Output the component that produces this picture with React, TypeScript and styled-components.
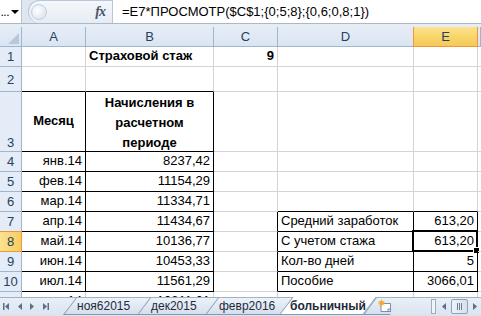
import React from "react";
import styled, { createGlobalStyle, css } from "styled-components";

const GlobalStyle = createGlobalStyle`
  html, body { margin: 0; padding: 0; background: #ffffff; }
  body { font-family: "Liberation Sans", Arial, sans-serif; }
`;

const Window = styled.div`
  width: 481px;
  height: 316px;
  display: flex;
  flex-direction: column;
  overflow: hidden;
  background: #dfe6ef;
`;

/* ---------- formula bar ---------- */

const FormulaBar = styled.div`
  height: 23px;
  display: flex;
  align-items: stretch;
  border-bottom: 1px solid #a9b8cb;
  background: #dfe6ef;
`;

const NameBox = styled.div`
  width: 22px;
  background: #ffffff;
  display: flex;
  align-items: center;
  justify-content: flex-end;
  gap: 2px;
  padding-right: 2px;
  box-sizing: border-box;
  font-size: 12px;
  color: #000;
  border-right: 1px solid #b7c4d5;
  white-space: nowrap;
`;

const Dots = styled.span`
  letter-spacing: -0.5px;
`;

const Caret = styled.span`
  flex: none;
  width: 0;
  height: 0;
  border-left: 4px solid transparent;
  border-right: 4px solid transparent;
  border-top: 4px solid #000;
`;

const FxPanel = styled.div`
  margin-left: 6px;
  width: 84px;
  display: flex;
  align-items: center;
  justify-content: flex-end;
  padding-right: 7px;
  box-sizing: border-box;
  background: linear-gradient(#f4f7fb, #e6ecf4);
  border: 1px solid #b9c6d7;
  border-right: none;
  border-bottom: none;
  border-radius: 12px 0 0 12px;
  position: relative;
`;

const Knob = styled.span`
  position: absolute;
  left: 2px;
  top: 3px;
  width: 16px;
  height: 16px;
  border-radius: 50%;
  background: radial-gradient(circle at 40% 40%, #ffffff, #d5dde8);
  border: 1px solid #c4cfdd;
  box-sizing: border-box;
`;

const Fx = styled.span`
  font-family: "Liberation Serif", "Times New Roman", serif;
  font-style: italic;
  font-weight: bold;
  font-size: 14px;
  color: #4b5565;
  letter-spacing: -1px;
`;

const FormulaInput = styled.div`
  flex: 1;
  background: #ffffff;
  display: flex;
  align-items: center;
  padding-left: 9px;
  font-size: 13px;
  color: #000;
  white-space: nowrap;
  border-left: 1px solid #b9c6d7;
`;

const Spacer = styled.div`
  height: 3px;
  background: #e8edf4;
`;

/* ---------- sheet grid ---------- */

const Sheet = styled.div`
  height: 270px;
  overflow: hidden;
  display: grid;
  grid-template-columns: 22px 64px 128px 64px 136px 64px 3px;
  grid-template-rows: 20px 20px 25px 60px repeat(7, 20px) 20px;
  background: #ffffff;
  font-size: 13px;
`;

const headerBase = css`
  box-sizing: border-box;
  display: flex;
  color: #27415e;
  font-size: 13px;
  border-right: 1px solid #9eb6ce;
  border-bottom: 1px solid #9eb6ce;
`;

const ColHeader = styled.div<{ $active?: boolean }>`
  ${headerBase}
  align-items: center;
  justify-content: center;
  background: ${(p) =>
    p.$active
      ? "linear-gradient(#fbe28f, #f8d66b 50%, #f4c95a)"
      : "linear-gradient(#e4ecf7, #dbe5f1)"};
  ${(p) =>
    p.$active &&
    css`
      border: 1px solid #f29536;
      border-top: none;
      margin-left: -1px;
    `}
`;

const Corner = styled.div`
  ${headerBase}
  background: linear-gradient(#e4ecf7, #dbe5f1);
  position: relative;
  &::after {
    content: "";
    position: absolute;
    right: 2px;
    bottom: 2px;
    border-left: 11px solid transparent;
    border-bottom: 11px solid #b9c8d9;
  }
`;

const RowHeader = styled.div<{ $active?: boolean; $bottom?: boolean }>`
  ${headerBase}
  justify-content: center;
  align-items: ${(p) => (p.$bottom ? "flex-end" : "center")};
  padding-bottom: ${(p) => (p.$bottom ? "1px" : "0")};
  background: ${(p) =>
    p.$active ? "linear-gradient(90deg, #fbe28f, #f6cd62)" : "#e4ecf7"};
  ${(p) =>
    p.$active &&
    css`
      border-right-color: #f29536;
      border-bottom-color: #f29536;
      border-top: 1px solid #f29536;
      margin-top: -1px;
    `}
`;

type Align = "left" | "right" | "center";

const Cell = styled.div<{
  $align?: Align;
  $bold?: boolean;
  $r?: boolean;
  $b?: boolean;
  $center?: boolean;
}>`
  box-sizing: border-box;
  position: relative;
  display: flex;
  align-items: ${(p) => (p.$center ? "center" : "flex-end")};
  justify-content: ${(p) =>
    p.$align === "right" ? "flex-end" : p.$align === "center" ? "center" : "flex-start"};
  text-align: ${(p) => p.$align || "left"};
  padding: 0 3px 2px 3px;
  font-weight: ${(p) => (p.$bold ? "bold" : "normal")};
  color: #000;
  white-space: nowrap;
  line-height: 16px;
  border-right: 1px solid ${(p) => (p.$r ? "#000" : "#d4d4d4")};
  border-bottom: 1px solid ${(p) => (p.$b ? "#000" : "#d4d4d4")};
`;

const Wrapped = styled.span`
  white-space: normal;
  line-height: 20px;
  padding-top: 4px;
`;

const Selection = styled.span`
  position: absolute;
  left: -2px;
  top: -2px;
  right: -1px;
  bottom: -1px;
  border: 2px solid #000;
  pointer-events: none;
`;

const FillHandle = styled.span`
  position: absolute;
  right: -4px;
  bottom: -4px;
  width: 5px;
  height: 5px;
  background: #000;
  border: 1px solid #fff;
`;

/* ---------- sheet tabs ---------- */

const TabBar = styled.div`
  height: 19px;
  display: flex;
  align-items: flex-start;
  background: linear-gradient(#e9eff7, #dae3ef);
  border-top: 1px solid #9fb2c8;
  box-sizing: border-box;
  font-size: 12px;
`;

const Nav = styled.div`
  width: 52px;
  height: 17px;
  display: flex;
  align-items: center;
  justify-content: space-between;
  padding: 0 2px 0 2px;
  box-sizing: border-box;
`;

const Tabs = styled.div`
  display: flex;
  height: 18px;
  margin-top: -1px;
  padding-left: 11px;
`;

const Tab = styled.div<{ $active?: boolean; $w: number }>`
  position: relative;
  flex: none;
  width: ${(p) => p.$w}px;
  height: 18px;
  box-sizing: border-box;
  display: flex;
  align-items: center;
  padding: 0 0 0 ${(p) => (p.$active ? 11 : 14)}px;
  color: #1e2b3c;
  font-weight: ${(p) => (p.$active ? "bold" : "normal")};
  z-index: ${(p) => (p.$active ? 2 : 1)};
  &::before {
    content: "";
    position: absolute;
    left: 0;
    right: 0;
    top: 0;
    bottom: 0;
    background: ${(p) =>
      p.$active ? "#ffffff" : "linear-gradient(#edf2f9, #d5dfec)"};
    border-left: 1px solid #8299b5;
    border-bottom: 1px solid #8299b5;
    ${(p) =>
      p.$active
        ? css`
            border-right: 1px solid #8299b5;
          `
        : css`
            border-top: 1px solid #9fb2c8;
          `}
    transform: skewX(-37deg);
    transform-origin: bottom left;
    z-index: -1;
  }
`;

const TabLabel = styled.span`
  position: relative;
  white-space: nowrap;
  display: flex;
  align-items: center;
`;

const Fill = styled.div`
  flex: 1;
`;

const Scroll = styled.div`
  width: 50px;
  height: 17px;
  display: flex;
  align-items: center;
  gap: 2px;
  padding-left: 2px;
`;

const Split = styled.span`
  width: 3px;
  height: 13px;
  border: 1px solid #9aabc2;
  background: #f1f4f9;
`;

const ScrollBtn = styled.span`
  width: 12px;
  height: 14px;
  display: flex;
  align-items: center;
  justify-content: center;
`;

const Thumb = styled.span`
  width: 15px;
  height: 13px;
  border: 1px solid #8ea2bb;
  border-radius: 2px;
  background: linear-gradient(90deg, #eef3f9, #d6e0ec);
  display: flex;
  align-items: center;
  justify-content: center;
  gap: 1px;
  & > i {
    width: 1px;
    height: 7px;
    background: #6b7f98;
  }
`;

const Tri = ({ dir, bar }: { dir: "l" | "r"; bar?: boolean }) => (
  <svg width="9" height="9" viewBox="0 0 9 9">
    {dir === "l" ? (
      <>
        {bar && <rect x="1" y="1" width="1.5" height="7" fill="#5a6f8c" />}
        <polygon points="7,1 7,8 3,4.5" fill="#5a6f8c" />
      </>
    ) : (
      <>
        <polygon points="2,1 2,8 6,4.5" fill="#5a6f8c" />
        {bar && <rect x="6.5" y="1" width="1.5" height="7" fill="#5a6f8c" />}
      </>
    )}
  </svg>
);

const InsertIcon = () => (
  <svg width="16" height="14" viewBox="0 0 16 14">
    <path d="M4 4.5 H13.5 V12.5 H4 Z" fill="#ffffff" stroke="#7a8fa9" />
    <path d="M11 10 L13.5 10 L13.5 12.5 L11 12.5 Z" fill="#dfe6ef" stroke="#7a8fa9" />
    <circle cx="4.5" cy="4" r="2.3" fill="#f7b23b" />
    <path
      d="M4.5 0.5 V7.5 M1 4 H8 M2 1.5 L7 6.5 M7 1.5 L2 6.5"
      stroke="#f3a32a"
      strokeWidth="0.8"
    />
  </svg>
);

/* ---------- data ---------- */

type Spec = {
  t?: string;
  bold?: boolean;
  align?: Align;
  r?: boolean;
  b?: boolean;
  center?: boolean;
  wrap?: boolean;
  sel?: boolean;
};

const months: [string, string][] = [
  ["янв.14", "8237,42"],
  ["фев.14", "11154,29"],
  ["мар.14", "11334,71"],
  ["апр.14", "11434,67"],
  ["май.14", "10136,77"],
  ["июн.14", "10453,33"],
  ["июл.14", "11561,29"],
  ["авг.14", "10811,61"],
];

const summary: [string, string][] = [
  ["Средний заработок", "613,20"],
  ["С учетом стажа", "613,20"],
  ["Кол-во дней", "5"],
  ["Пособие", "3066,01"],
];

const rows: { label: string; bottom?: boolean; cells: Spec[] }[] = [
  {
    label: "1",
    cells: [
      {},
      { t: "Страховой стаж", bold: true },
      { t: "9", bold: true, align: "right" },
      {},
      {},
    ],
  },
  { label: "2", cells: [{ b: true }, { b: true }, {}, {}, {}] },
  {
    label: "3",
    bottom: true,
    cells: [
      { t: "Месяц", bold: true, align: "center", center: true, r: true, b: true },
      {
        t: "Начисления в расчетном периоде",
        bold: true,
        align: "center",
        center: true,
        wrap: true,
        r: true,
        b: true,
      },
      {},
      {},
      {},
    ],
  },
  ...months.map(([m, v], i) => {
    const n = i + 4;
    const s = n >= 7 && n <= 10 ? summary[n - 7] : null;
    const inTable = n <= 10;
    return {
      label: String(n),
      cells: [
        { t: m, align: "right" as Align, r: inTable, b: inTable },
        { t: v, align: "right" as Align, r: inTable, b: inTable },
        { r: !!s },
        s ? { t: s[0], r: true, b: true } : { b: n === 6 },
        s
          ? { t: s[1], align: "right" as Align, r: true, b: true, sel: n === 8 }
          : { b: n === 6 },
      ],
    };
  }),
];

const sheetTabs = [
  { name: "ноя62015", w: 74 },
  { name: "дек2015", w: 68 },
  { name: "февр2016", w: 74 },
  { name: "больничный", w: 84, active: true },
];

export default function App() {
  return (
    <>
      <GlobalStyle />
      <Window>
        <FormulaBar>
          <NameBox>
            <Dots>...</Dots>
            <Caret />
          </NameBox>
          <FxPanel>
            <Knob />
            <Fx>fx</Fx>
          </FxPanel>
          <FormulaInput>=E7*ПРОСМОТР($C$1;{"{"}0;5;8{"}"};{"{"}0,6;0,8;1{"}"})</FormulaInput>
        </FormulaBar>
        <Spacer />
        <Sheet>
          <Corner />
          {["A", "B", "C", "D", "E"].map((c) => (
            <ColHeader key={c} $active={c === "E"}>
              {c}
            </ColHeader>
          ))}
          <ColHeader />
          {rows.map((row) => (
            <React.Fragment key={row.label}>
              <RowHeader $bottom={row.bottom} $active={row.label === "8"}>
                {row.label}
              </RowHeader>
              {row.cells.map((c, i) => (
                <Cell
                  key={i}
                  $align={c.align}
                  $bold={c.bold}
                  $r={c.r}
                  $b={c.b}
                  $center={c.center}
                >
                  {c.wrap ? <Wrapped>{c.t}</Wrapped> : c.t}
                  {c.sel && (
                    <Selection>
                      <FillHandle />
                    </Selection>
                  )}
                </Cell>
              ))}
              <Cell />
            </React.Fragment>
          ))}
        </Sheet>
        <TabBar>
          <Nav>
            <Tri dir="l" bar />
            <Tri dir="l" />
            <Tri dir="r" />
            <Tri dir="r" bar />
          </Nav>
          <Tabs>
            {sheetTabs.map((t) => (
              <Tab key={t.name} $w={t.w} $active={t.active}>
                <TabLabel>{t.name}</TabLabel>
              </Tab>
            ))}
            <Tab $w={27}>
              <TabLabel>
                <InsertIcon />
              </TabLabel>
            </Tab>
          </Tabs>
          <Fill />
          <Scroll>
            <Split />
            <ScrollBtn>
              <Tri dir="l" />
            </ScrollBtn>
            <Thumb>
              <i />
              <i />
              <i />
            </Thumb>
            <ScrollBtn>
              <Tri dir="r" />
            </ScrollBtn>
          </Scroll>
        </TabBar>
      </Window>
    </>
  );
}
